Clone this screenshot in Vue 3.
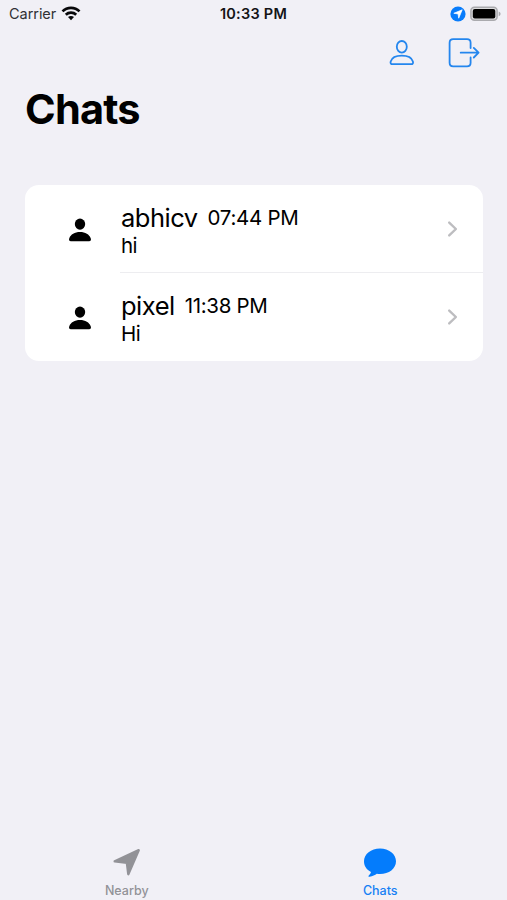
<script setup>
const chats = [
  { name: 'abhicv', time: '07:44 PM', message: 'hi' },
  { name: 'pixel', time: '11:38 PM', message: 'Hi' },
]
</script>

<template>
  <div class="screen">
    <header class="status">
      <div class="carrier">
        <span class="carrier-name">Carrier</span>
        <svg class="wifi" width="20" height="15" viewBox="0 0 20 15">
          <g fill="none" stroke="#08080a" stroke-width="2.7">
            <path d="M1.5 5.4C6.2.7 13.8.7 18.5 5.4" />
            <path d="M4.8 8.8c2.9-2.8 7.5-2.8 10.4 0" />
          </g>
          <path d="M7 11.1c1.7-1.5 4.3-1.5 6 0L10 14.2z" fill="#08080a" />
        </svg>
      </div>
      <time class="clock">10:33 PM</time>
      <div class="indicators">
        <svg width="16" height="16" viewBox="0 0 16 16">
          <circle cx="8" cy="8" r="7.6" fill="#087cfb" />
          <path d="M12.2 3.8 8.7 12.2 8.1 7.9 3.8 7.3z" fill="#fff" stroke="#fff" stroke-width=".7" stroke-linejoin="round" />
        </svg>
        <svg width="32" height="16" viewBox="0 0 32 16">
          <rect x=".9" y="1.3" width="26.2" height="12.9" rx="3.5" fill="#dcdcde" stroke="#aaaaae" stroke-width="1.5" />
          <rect x="2.8" y="3.1" width="22.5" height="9.4" rx="2" fill="#000" />
          <path d="M28.7 5.5c2.5.8 2.5 3.9 0 4.7z" fill="#aaaaae" />
        </svg>
      </div>
    </header>

    <nav class="toolbar">
      <svg width="26" height="28" viewBox="0 0 26 28" fill="none" stroke="#2486ee" stroke-width="1.8">
        <ellipse cx="12.8" cy="7.8" rx="5" ry="5.8" />
        <path d="M3.6 25.2C1.8 25.2 1.2 24 1.7 22.4 2.8 18.8 7 16.6 12.8 16.6s10 2.2 11.1 5.8c.5 1.6-.1 2.8-1.9 2.8z" />
      </svg>
      <svg width="33" height="30" viewBox="0 0 33 30" fill="none" stroke="#2486ee" stroke-width="1.8" stroke-linecap="round" stroke-linejoin="round">
        <path d="M22.6 10V4.7q0-3.6-3.6-3.6H5.2q-3.6 0-3.6 3.6v20.1q0 3.6 3.6 3.6H19q3.6 0 3.6-3.6v-5.3" />
        <path d="M12.7 14.7h17.7M25.8 9.9l4.8 4.8-4.8 4.8" />
      </svg>
    </nav>

    <h1 class="title">Chats</h1>

    <main class="list">
      <article v-for="chat in chats" :key="chat.name" class="row">
        <svg class="avatar" width="24" height="24" viewBox="0 0 24 24">
          <ellipse cx="12" cy="6.1" rx="5.2" ry="5.6" />
          <path d="M3 23.2c-2 0-2.3-1.5-1.7-3C2.7 16.5 6.7 14 12 14s9.3 2.5 10.7 6.2c.6 1.5.3 3-1.7 3z" />
        </svg>
        <div class="body">
          <div class="text">
            <div class="heading">
              <span class="name">{{ chat.name }}</span>
              <span class="time">{{ chat.time }}</span>
            </div>
            <div class="message">{{ chat.message }}</div>
          </div>
          <svg class="chevron" width="12" height="18" viewBox="0 0 12 18">
            <path d="M2.2 2.6 8.9 9l-6.7 6.4" />
          </svg>
        </div>
      </article>
    </main>

    <footer class="tabs">
      <div class="tab">
        <svg width="30" height="30" viewBox="0 0 30 30">
          <path d="M26.7 3.2 16.3 27.2 14.9 15.9 2.7 14.3z" fill="#929297" stroke="#929297" stroke-width="2.4" stroke-linejoin="round" />
        </svg>
        <span>Nearby</span>
      </div>
      <div class="tab active">
        <svg width="34" height="30" viewBox="0 0 34 30">
          <path d="M17 1.4C8 1.4 1 7 1 14.3c0 4.8 2.7 8.5 7 10.8-.3 1.4-1.3 2.7-2.2 3.3-.7.8-.3 1.5.8 1.3 3-.4 5.4-1.4 7.2-2.9 1 .2 2.1.3 3.2.3 9 0 16-5.5 16-12.8S26 1.4 17 1.4z" fill="#047cfc" />
        </svg>
        <span>Chats</span>
      </div>
    </footer>
  </div>
</template>

<style>
body {
  background: #f1f0f6;
}
</style>

<style scoped>
.screen {
  box-sizing: border-box;
  height: 900px;
  display: flex;
  flex-direction: column;
  background: #f1f0f6;
  color: #000;
  font-family: Inter, "Liberation Sans", sans-serif;
}
.status {
  height: 27px;
  display: grid;
  grid-template-columns: 1fr auto 1fr;
  align-items: center;
  padding: 0 5px 0 9px;
  font-size: 14.5px;
  line-height: 27px;
}
.carrier {
  display: flex;
  align-items: center;
  gap: 5px;
}
.carrier-name {
  color: #303034;
  letter-spacing: -0.05px;
}
.wifi {
  margin-bottom: 1px;
}
.clock {
  margin-right: 4px;
  font-size: 14.5px;
  font-weight: 600;
  letter-spacing: 0.25px;
  color: #141416;
}
.indicators {
  display: flex;
  justify-content: flex-end;
  gap: 4px;
}
.toolbar {
  height: 51px;
  display: flex;
  justify-content: flex-end;
  align-items: center;
  gap: 33px;
  padding-right: 26px;
}
.title {
  margin: 5px 0 0 25px;
  font-size: 41.5px;
  line-height: 52px;
  font-weight: 700;
  letter-spacing: -0.8px;
}
.list {
  width: 458px;
  margin: 50px 0 0 25px;
  border-radius: 14px;
  background: #fff;
  overflow: hidden;
}
.row {
  height: 88px;
  display: flex;
  align-items: center;
}
.avatar {
  margin: 1px 28px 0 43px;
}
.body {
  box-sizing: border-box;
  flex: 1;
  height: 88px;
  display: flex;
  align-items: center;
  justify-content: space-between;
  padding-right: 24px;
  border-bottom: 1px solid #ededf0;
}
.row:last-child .body {
  border-bottom-color: transparent;
}
.text {
  padding: 2px 0 0 1px;
}
.heading {
  display: flex;
  align-items: center;
  gap: 10px;
  height: 32px;
}
.name {
  font-size: 25.5px;
  letter-spacing: -0.5px;
}
.time {
  font-size: 20.5px;
  letter-spacing: -0.3px;
}
.message {
  font-size: 20.5px;
  line-height: 25px;
  letter-spacing: -0.5px;
}
.chevron {
  margin-top: 1px;
}
.chevron path {
  fill: none;
  stroke: #bdbdc0;
  stroke-width: 2.4;
  stroke-linecap: round;
  stroke-linejoin: round;
}
.tabs {
  margin-top: auto;
  height: 53px;
  display: grid;
  grid-template-columns: 1fr 1fr;
}
.tab {
  display: flex;
  flex-direction: column;
  align-items: center;
  gap: 6px;
  font-size: 12.5px;
  line-height: 16px;
  font-weight: 500;
  color: #929297;
}
.active {
  color: #1680f4;
}
</style>
